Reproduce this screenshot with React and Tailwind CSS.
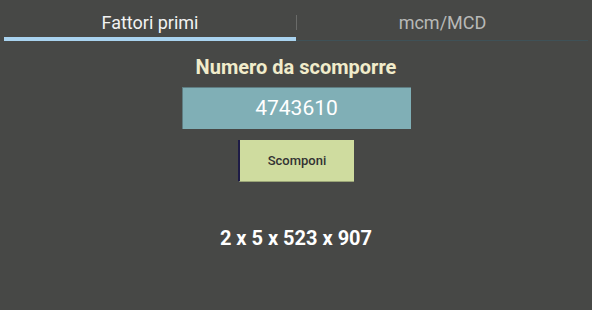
import React from "react";

const App = () => {
  return (
    <div
      className="w-[592px] h-[310px] bg-[#474846] flex flex-col"
      style={{ fontFamily: "Roboto, 'Liberation Sans', sans-serif" }}
    >
      <div className="flex px-[4px] pt-[8px]">
        <div className="w-[292px] flex flex-col">
          <div className="h-[29px] flex items-center justify-center text-[18px] text-[#f2f2f2]">
            Fattori primi
          </div>
          <div className="h-[4px] bg-[#a9d3ef]" />
        </div>
        <div className="flex-1 flex flex-col">
          <div className="h-[29px] flex items-center">
            <div className="w-px h-[15px] bg-[#6a6b69]" />
            <div className="flex-1 text-center text-[18px] text-[#b8b9b7]">mcm/MCD</div>
          </div>
          <div className="h-[4px] flex flex-col justify-end">
            <div className="h-px bg-[#3f5157]" />
          </div>
        </div>
      </div>

      <div className="flex flex-col items-center">
        <div className="mt-[13px] text-[20px] font-bold text-[#f1eccb] leading-[26px]">
          Numero da scomporre
        </div>
        <div className="mt-[7px] w-[229px] h-[42px] bg-[#80afb6] border-t border-l border-[#5f7d82] flex items-center justify-center text-[21px] text-white">
          4743610
        </div>
        <button className="mt-[11px] w-[116px] h-[42px] bg-[#cfdc9f] border-l-2 border-[#1e1c46] border-b border-b-[#9aa477] text-[13px] font-medium text-[#333]">
          Scomponi
        </button>
        <div className="mt-[42px] text-[20px] font-bold text-white leading-[28px]">
          2 x 5 x 523 x 907
        </div>
      </div>
    </div>
  );
};

export default App;
